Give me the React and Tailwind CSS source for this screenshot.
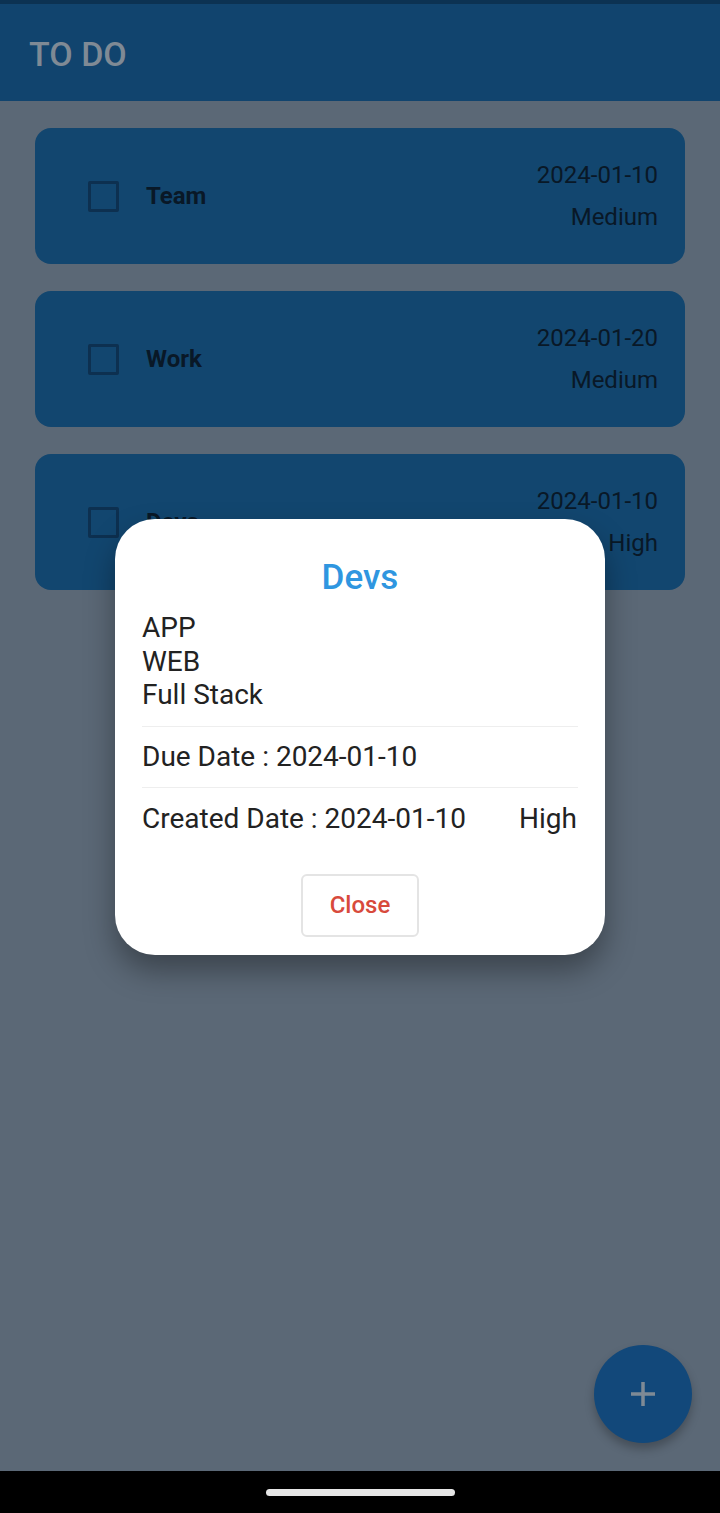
import React from 'react';

const todos = [
  { title: 'Team', due: '2024-01-10', priority: 'Medium' },
  { title: 'Work', due: '2024-01-20', priority: 'Medium' },
  { title: 'Devs', due: '2024-01-10', priority: 'High' },
];

function TodoCard({ todo }) {
  return (
    <div className="flex h-[136px] items-center rounded-[16px] bg-[#12466f] pl-[53px] pr-[27px]">
      <div className="h-[31px] w-[31px] rounded-[2px] border-[3px] border-[#0d3050]" />
      <div className="ml-[27px] flex-1 text-[24px] font-bold text-[#091827]">{todo.title}</div>
      <div className="flex flex-col items-end gap-[10px] text-[24px] leading-[32px] text-[#091827]">
        <span>{todo.due}</span>
        <span>{todo.priority}</span>
      </div>
    </div>
  );
}

function DetailModal() {
  return (
    <div className="absolute left-[115px] top-[519px] w-[490px] rounded-[40px] bg-white px-[27px] pb-[18px] pt-[38px] shadow-[0_16px_30px_rgba(0,0,0,0.35)]">
      <h2 className="text-center text-[35px] font-medium leading-[42px] text-[#2f96e0]">Devs</h2>
      <div className="mt-[12px] text-[28px] leading-[33.5px] text-[#222]">
        <div>APP</div>
        <div>WEB</div>
        <div>Full Stack</div>
      </div>
      <div className="mt-[14px] border-t border-[#eeeeee]" />
      <div className="py-[12px] text-[28px] leading-[36px] text-[#222]">Due Date : 2024-01-10</div>
      <div className="border-t border-[#eeeeee]" />
      <div className="flex items-center justify-between pb-[12px] pr-[1px] pt-[13px] text-[28px] leading-[36px] text-[#222]">
        <span>Created Date : 2024-01-10</span>
        <span>High</span>
      </div>
      <div className="mt-[25px] flex justify-center">
        <button
          type="button"
          className="h-[63px] w-[118px] rounded-[6px] border-2 border-[#e4e4e4] bg-white text-[24px] font-medium text-[#d84a3c]"
        >
          Close
        </button>
      </div>
    </div>
  );
}

export default function App() {
  return (
    <div className="relative flex h-[1513px] w-[720px] flex-col overflow-hidden bg-[#5b6876] font-['Roboto',sans-serif]">
      <div className="h-[4px] bg-[#0c3252]" />
      <header className="flex h-[97px] items-center bg-[#11446e] px-[29px] pt-[4px]">
        <h1 className="text-[34px] font-medium text-[#7f8a95]">TO DO</h1>
      </header>

      <main className="flex flex-1 flex-col gap-[27px] px-[35px] pt-[27px]">
        {todos.map((t) => (
          <TodoCard key={t.title} todo={t} />
        ))}
      </main>

      <button
        type="button"
        className="absolute left-[594px] top-[1345px] flex h-[98px] w-[98px] items-center justify-center rounded-full bg-[#12487a] shadow-[0_6px_10px_rgba(0,0,0,0.25)]"
      >
        <svg width="28" height="28" viewBox="0 0 28 28">
          <path d="M14 2v24M2 14h24" stroke="#7f8a95" strokeWidth="3.5" />
        </svg>
      </button>

      <DetailModal />

      <div className="flex h-[42px] items-center justify-center bg-black">
        <div className="h-[7px] w-[189px] rounded-full bg-[#e6e6e6]" />
      </div>
    </div>
  );
}
